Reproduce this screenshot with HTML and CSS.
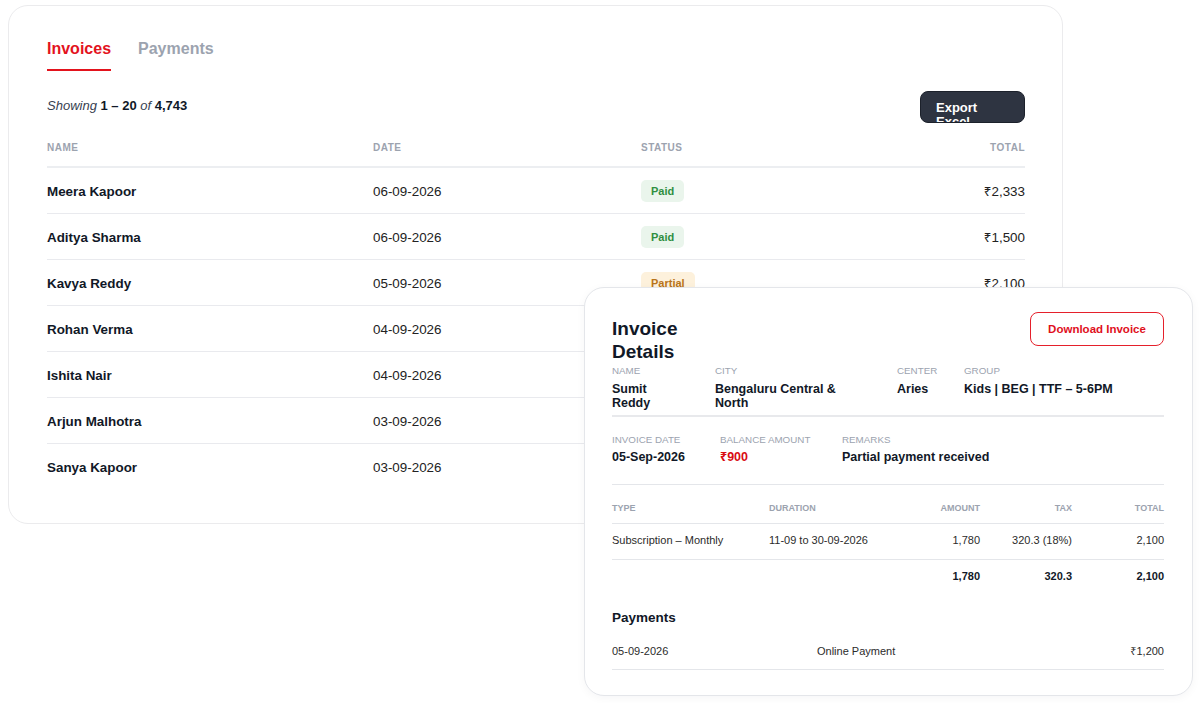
FILE: index.html
```html
<!DOCTYPE html>
<html lang="en">
<head>
<meta charset="utf-8">
<title>Invoices</title>
<link rel="stylesheet" href="styles.css">
</head>
<body>
<div class="page">
  <section class="card">
    <nav class="tabs">
      <span class="tab active">Invoices</span>
      <span class="tab">Payments</span>
    </nav>
    <div class="toolbar">
      <p class="showing"><i>Showing</i> <b>1 – 20</b> <i>of</i> <b>4,743</b></p>
      <button class="btn-export">Export Excel</button>
    </div>
    <div class="table">
      <div class="row head">
        <span>Name</span><span>Date</span><span>Status</span><span class="right">Total</span>
      </div>
      <div class="row">
        <span class="name">Meera Kapoor</span><span>06-09-2026</span><span><em class="badge paid">Paid</em></span><span class="right">₹2,333</span>
      </div>
      <div class="row">
        <span class="name">Aditya Sharma</span><span>06-09-2026</span><span><em class="badge paid">Paid</em></span><span class="right">₹1,500</span>
      </div>
      <div class="row">
        <span class="name">Kavya Reddy</span><span>05-09-2026</span><span><em class="badge partial">Partial</em></span><span class="right">₹2,100</span>
      </div>
      <div class="row">
        <span class="name">Rohan Verma</span><span>04-09-2026</span><span><em class="badge paid">Paid</em></span><span class="right">₹1,800</span>
      </div>
      <div class="row">
        <span class="name">Ishita Nair</span><span>04-09-2026</span><span><em class="badge paid">Paid</em></span><span class="right">₹2,400</span>
      </div>
      <div class="row">
        <span class="name">Arjun Malhotra</span><span>03-09-2026</span><span><em class="badge paid">Paid</em></span><span class="right">₹1,950</span>
      </div>
      <div class="row last">
        <span class="name">Sanya Kapoor</span><span>03-09-2026</span><span><em class="badge paid">Paid</em></span><span class="right">₹2,250</span>
      </div>
    </div>
  </section>

  <section class="details">
    <header class="details-head">
      <h2 class="details-title">Invoice Details</h2>
      <button class="btn-download">Download Invoice</button>
    </header>
    <div class="info info-1">
      <div class="cell c-name"><div class="label">Name</div><div class="value">Sumit Reddy</div></div>
      <div class="cell c-city"><div class="label">City</div><div class="value">Bengaluru Central &amp; North</div></div>
      <div class="cell c-center"><div class="label">Center</div><div class="value">Aries</div></div>
      <div class="cell"><div class="label">Group</div><div class="value">Kids | BEG | TTF – 5-6PM</div></div>
    </div>
    <div class="info info-2">
      <div class="cell"><div class="label">Invoice Date</div><div class="value">05-Sep-2026</div></div>
      <div class="cell"><div class="label">Balance Amount</div><div class="value red">₹900</div></div>
      <div class="cell"><div class="label">Remarks</div><div class="value">Partial payment received</div></div>
    </div>
    <div class="items">
      <div class="irow ihead">
        <span>Type</span><span>Duration</span><span class="right">Amount</span><span class="right">Tax</span><span class="right">Total</span>
      </div>
      <div class="irow ibody">
        <span>Subscription – Monthly</span><span>11-09 to 30-09-2026</span><span class="right">1,780</span><span class="right">320.3 (18%)</span><span class="right">2,100</span>
      </div>
      <div class="irow itotal">
        <span></span><span></span><span class="right">1,780</span><span class="right">320.3</span><span class="right">2,100</span>
      </div>
    </div>
    <h3 class="pay-title">Payments</h3>
    <div class="prow">
      <span>05-09-2026</span><span>Online Payment</span><span class="right">₹1,200</span>
    </div>
  </section>
</div>
</body>
</html>
```
FILE: styles.css
```css
* { box-sizing: border-box; }
html, body {
  margin: 0;
  padding: 0;
  background: #ffffff;
}
body {
  font-family: "Liberation Sans", "Noto Sans", Arial, Helvetica, sans-serif;
  color: #111827;
  width: 1200px;
  height: 703px;
  overflow: hidden;
}
.page {
  position: relative;
  width: 1200px;
  height: 703px;
  padding: 5px 0 0 8px;
}

/* main card */
.card {
  width: 1055px;
  height: 519px;
  border: 1px solid #ebebed;
  border-radius: 20px;
  padding: 33px 37px 0 38px;
  background: #fff;
}
.tabs {
  display: flex;
  gap: 27px;
  align-items: flex-start;
}
.tab {
  font-size: 16px;
  line-height: 20px;
  font-weight: 700;
  color: #9ca3af;
  padding-bottom: 12px;
}
.tab.active {
  color: #e3131d;
  padding-bottom: 10px;
  border-bottom: 2px solid #e3131d;
}
.toolbar {
  margin-top: 20px;
  height: 32px;
  display: flex;
  justify-content: space-between;
  align-items: center;
}
.showing {
  margin: 0;
  font-size: 13px;
  line-height: 16px;
  color: #111827;
  position: relative;
  top: -1px;
}
.showing i { color: #374151; }
.btn-export {
  width: 105px;
  height: 32px;
  overflow: hidden;
  background: #2e3441;
  border: 1px solid #1c212b;
  border-radius: 8px;
  color: #fff;
  font-family: inherit;
  font-size: 13px;
  font-weight: 700;
  line-height: 14px;
  text-align: left;
  padding: 9px 16px 0 15px;
  display: block;
}

.row {
  display: grid;
  grid-template-columns: 326px 268px 1fr 200px;
  align-items: center;
  height: 46px;
  padding-top: 1px;
  border-bottom: 1px solid #e9eaee;
  font-size: 13.4px;
  color: #222;
}
.row.head {
  height: auto;
  padding: 18px 0 11px;
  border-bottom: 2px solid #eceef1;
  font-size: 10px;
  line-height: 14px;
  font-weight: 700;
  letter-spacing: 0.5px;
  text-transform: uppercase;
  color: #9ca3af;
}
.row.last { border-bottom: none; }
.row .name { font-weight: 700; color: #111827; }
.right { text-align: right; }
.badge {
  display: inline-block;
  vertical-align: middle;
  font-style: normal;
  font-size: 11px;
  font-weight: 700;
  line-height: 22px;
  height: 22px;
  padding: 0 10px;
  border-radius: 5px;
}
.badge.paid { background: #eaf5ec; color: #2f8f3f; }
.badge.partial { background: #fdf1dc; color: #b8741a; }

/* details overlay */
.details {
  position: absolute;
  left: 584px;
  top: 287px;
  width: 609px;
  height: 409px;
  background: #fff;
  border: 1px solid #e4e6ea;
  border-radius: 20px;
  padding: 24px 28px 0 27px;
  box-shadow: 0 2px 10px rgba(17, 24, 39, 0.04);
}
.details-head {
  display: flex;
  justify-content: space-between;
  align-items: flex-start;
  height: 53px;
}
.details-title {
  margin: 5px 0 0;
  width: 80px;
  font-size: 19px;
  line-height: 23px;
  font-weight: 700;
  color: #111827;
}
.btn-download {
  width: 134px;
  height: 34px;
  background: #fff;
  border: 1px solid #e5202b;
  border-radius: 8px;
  color: #e0101c;
  font-family: inherit;
  font-size: 11.5px;
  font-weight: 700;
  padding: 0;
}
.info {
  display: grid;
  border-bottom: 2px solid #e8e9ec;
}
.info-1 {
  grid-template-columns: 103px 182px 67px 1fr;
  padding-bottom: 5px;
}
.info-1 .value { margin-top: 5px; }
.info-2 {
  grid-template-columns: 108px 122px 1fr;
  padding: 17px 0 20px;
  border-bottom-width: 1px;
  border-bottom-color: #e4e6ea;
}
.c-name .value { max-width: 66px; }
.c-city .value { max-width: 140px; }
.label {
  font-size: 9.8px;
  line-height: 12px;
  color: #9ca3af;
  text-transform: uppercase;
}
.value {
  margin-top: 4px;
  font-size: 12.5px;
  line-height: 14px;
  font-weight: 700;
  color: #111827;
}
.value.red { color: #d90d12; }

.irow {
  display: grid;
  grid-template-columns: 157px 130px 81px 92px 92px;
  font-size: 11px;
  line-height: 14px;
  color: #2b2b2b;
}
.ihead {
  padding: 17px 0 9px;
  border-bottom: 1px solid #e4e6ea;
  font-size: 9px;
  line-height: 12px;
  font-weight: 700;
  color: #9ca3af;
  text-transform: uppercase;
}
.ibody {
  padding: 9px 0 12px;
  border-bottom: 1px solid #e4e6ea;
}
.itotal {
  padding-top: 9px;
  font-weight: 700;
  color: #111827;
}
.pay-title {
  margin: 26px 0 0;
  font-size: 13.5px;
  line-height: 18px;
  font-weight: 700;
  color: #111827;
}
.prow {
  margin-top: 17px;
  display: grid;
  grid-template-columns: 205px 1fr auto;
  padding-bottom: 11px;
  border-bottom: 1px solid #e4e6ea;
  font-size: 11px;
  line-height: 14px;
  color: #2b2b2b;
}
```
